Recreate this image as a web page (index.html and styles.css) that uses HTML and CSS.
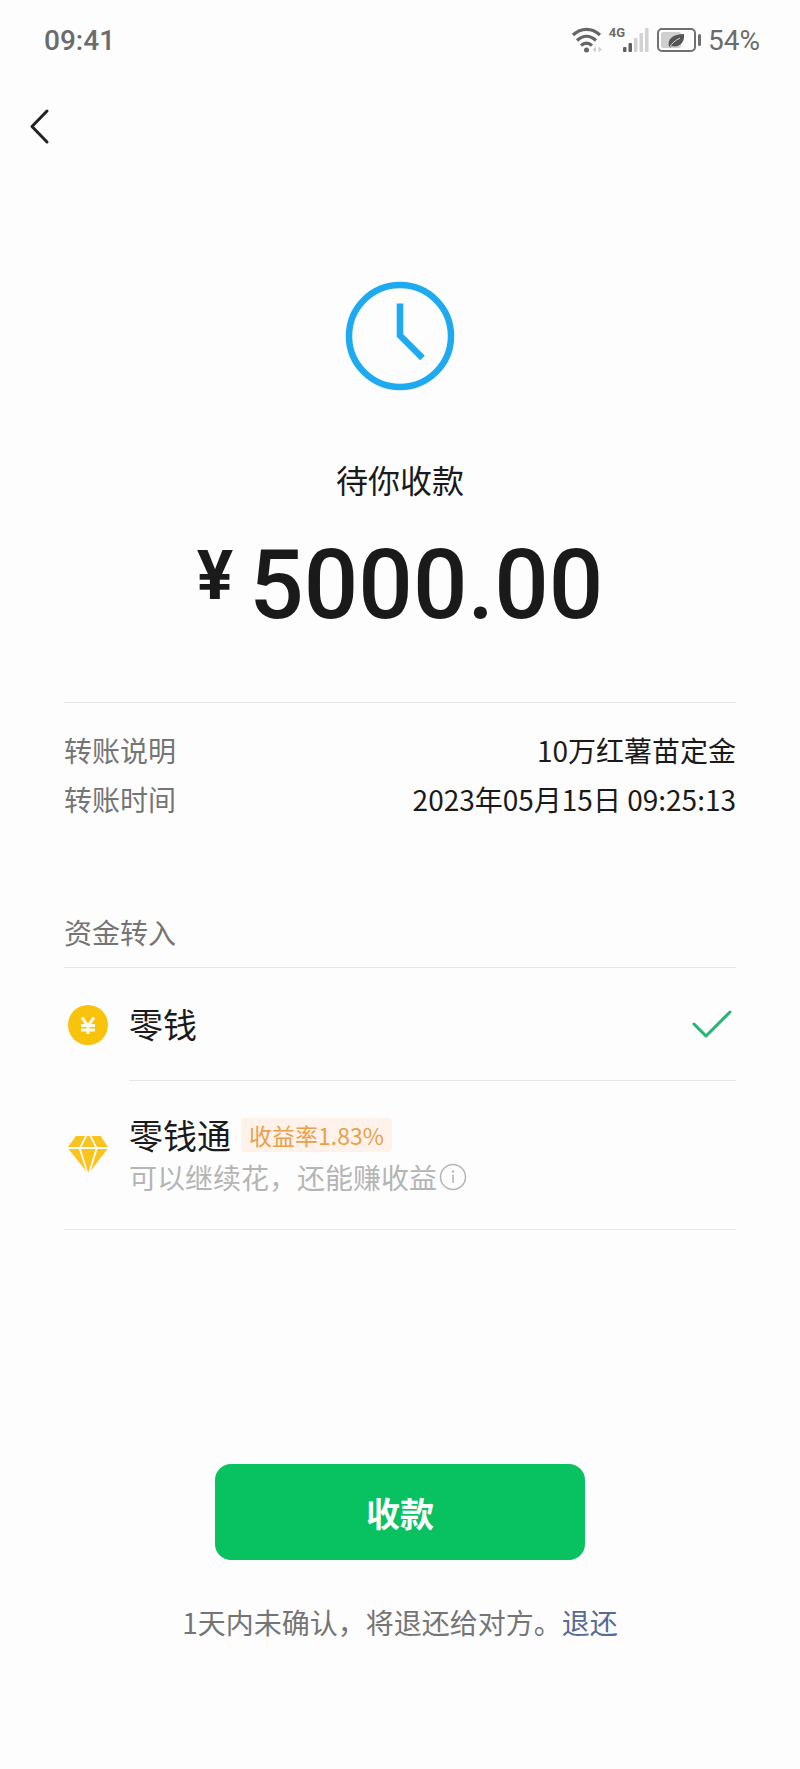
FILE: index.html
```html
<!DOCTYPE html>
<html lang="zh-CN">
<head>
  <meta charset="UTF-8">
  <meta name="viewport" content="width=device-width,initial-scale=1.0">
  <title>待你收款</title>
  <link rel="stylesheet" href="styles.css">
</head>
<body>

<!-- STATUS BAR -->
<div class="status-bar">
  <span class="status-time">09:41</span>
  <div class="status-icons">
    <svg class="wifi" width="32" height="28" viewBox="0 0 32 28" fill="none" stroke="#666" stroke-width="3.200">
      <path d="M2 9C10 1.500 21 1.500 29 9"/>
      <path d="M6 14.500C12 9 19 9 25 14.500"/>
      <path d="M10 19.500C13.500 16.500 17.500 16.500 21 19.500"/>
      <circle cx="15.500" cy="24" r="2.500" fill="#666" stroke="none"/>
      <path d="M25 20.500v6L21.500 23.500zM27.500 20.500v6l3.500-3z" fill="#cfcfcf" stroke="none"/>
    </svg>
    <div class="signal">
      <span class="network">4G</span>
      <svg width="28" height="28" viewBox="0 0 28 28">
        <g fill="#606060">
          <rect x="1" y="21" width="3.500" height="5" rx="1"/>
          <rect x="6.500" y="17" width="3.500" height="9" rx="1"/>
        </g>
        <g fill="#d2d2d2">
          <rect x="12" y="12" width="3.500" height="14" rx="1"/>
          <rect x="17.500" y="7" width="3.500" height="19" rx="1"/>
          <rect x="23" y="2" width="3.500" height="24" rx="1"/>
        </g>
      </svg>
    </div>
    <svg class="battery" width="46" height="28" viewBox="0 0 46 28">
      <rect x="5" y="6" width="20" height="16" rx="2" fill="#cfcfcf"/>
      <rect x="2" y="3" width="37" height="22" rx="4" fill="none" stroke="#707070" stroke-width="2"/>
      <rect x="42" y="8" width="3" height="12" rx="1.500" fill="#707070"/>
      <path d="M13 21C11 13 17 8 28 8C29 17 23 22 15.500 20L14 22Z" fill="#555"/>
      <path d="M13 22C16 17 19 14.500 24 12" fill="none" stroke="#d8d8d8" stroke-width="1"/>
    </svg>
    <span class="battery-level">54%</span>
  </div>
</div>

<!-- NAV -->
<nav class="nav">
  <a href="#" class="back" aria-label="返回">
    <svg width="24" height="40" viewBox="0 0 24 40" fill="none" stroke="#222" stroke-width="3" stroke-linecap="round" stroke-linejoin="round">
      <path d="M19 5L4 20.500L19 36"/>
    </svg>
  </a>
</nav>

<main class="content">
  <!-- AMOUNT -->
  <section class="summary">
    <svg class="clock" width="110" height="110" viewBox="0 0 110 110" fill="none" stroke="#1eaaf1" stroke-width="6.500">
      <circle cx="55" cy="55" r="51"/>
      <path d="M55 22.500V54.500L77.500 77"/>
    </svg>
    <h1>待你收款</h1>
    <p class="amount"><span class="currency">¥</span>5000.00</p>
  </section>

  <!-- TRANSFER DETAILS -->
  <dl class="details">
    <div class="detail-row">
      <dt>转账说明</dt>
      <dd>10万红薯苗定金</dd>
    </div>
    <div class="detail-row">
      <dt>转账时间</dt>
      <dd>2023年05月15日 09:25:13</dd>
    </div>
  </dl>

  <!-- ACCOUNT CHOICE -->
  <form class="accounts">
    <h2>资金转入</h2>
    <label class="account">
      <svg class="account-icon" width="48" height="48" viewBox="0 0 48 48">
        <circle cx="24" cy="24" r="20" fill="#fac30b"/>
        <path d="M18 16.500L24 25L30 16.500M24 24.500V33M17 24.500H31M17 29H31" fill="none" stroke="#fffdf0" stroke-width="3"/>
      </svg>
      <span class="account-body account-body-first">
        <span class="account-name">零钱</span>
        <span class="check">
          <input type="radio" name="account" value="balance" checked>
          <svg width="44" height="32" viewBox="0 0 44 32" fill="none" stroke="#24b571" stroke-width="3" stroke-linecap="round" stroke-linejoin="round">
            <path d="M2 16L14 28L38 4"/>
          </svg>
        </span>
      </span>
    </label>
    <label class="account">
      <svg class="account-icon" width="48" height="48" viewBox="0 0 48 48" fill="#fac31e">
        <path d="M12 5H21L15.500 16H4Z"/>
        <path d="M23 5H25.500L31 16H17.500Z"/>
        <path d="M27.500 5H36.500L44 16H33Z"/>
        <path d="M4.500 18H15L22 40Z"/>
        <path d="M17 18H31.500L24.200 42Z"/>
        <path d="M33.500 18H43.500L26.500 40Z"/>
      </svg>
      <span class="account-body">
        <span class="account-text">
          <span class="account-title">
            <span class="account-name">零钱通</span>
            <span class="rate">收益率1.83%</span>
          </span>
          <span class="account-note">可以继续花，还能赚收益<svg width="30" height="28" viewBox="0 0 30 28" fill="none" stroke="#b5b5b5" stroke-width="1.500"><circle cx="16" cy="14" r="12.500"/><path d="M16 11.500V20"/><circle cx="16" cy="8.500" r="1.200" fill="#b5b5b5" stroke="none"/></svg></span>
        </span>
        <span class="check">
          <input type="radio" name="account" value="fund">
          <svg width="44" height="32" viewBox="0 0 44 32" fill="none" stroke="#24b571" stroke-width="3" stroke-linecap="round" stroke-linejoin="round">
            <path d="M2 16L14 28L38 4"/>
          </svg>
        </span>
      </span>
    </label>
  </form>

  <!-- CONFIRM -->
  <section class="actions">
    <button type="button" class="receive">收款</button>
    <p>1天内未确认，将退还给对方。<a href="#">退还</a></p>
  </section>
</main>

</body>
</html>
```
FILE: styles.css
```css
* {
  box-sizing: border-box;
  margin: 0;
  padding: 0;
}
body {
  font-family: "Noto Sans CJK SC", sans-serif;
  font-size: 28px;
  background-color: #fdfdfd;
  color: #1a1a1a;
}
svg {
  display: block;
  flex-shrink: 0;
}

/* STATUS BAR */
.status-bar {
  display: flex;
  justify-content: space-between;
  align-items: center;
  height: 80px;
  padding: 0 40px 0 44px;
  font-family: Roboto, sans-serif;
  color: #6b6b6b;
}
.status-time {
  font-weight: 500;
}
.status-icons {
  display: flex;
  align-items: center;
  gap: 6px;
}
.signal {
  display: flex;
  align-items: flex-start;
}
.network {
  font-size: 13px;
  line-height: 14px;
  font-weight: bold;
  margin-right: -3px;
}

/* NAV */
.nav {
  display: flex;
  align-items: center;
  height: 92px;
  padding: 0 28px;
}

/* AMOUNT */
.content {
  padding: 109px 64px 0;
}
.summary {
  display: flex;
  flex-direction: column;
  align-items: center;
  padding-bottom: 61px;
  border-bottom: 1px solid #e6e6e6;
}
.summary h1 {
  margin-top: 64px;
  font-size: 32px;
  line-height: 48px;
  font-weight: normal;
}
.amount {
  display: flex;
  align-items: flex-start;
  gap: 16px;
  margin-top: 26px;
  font-family: Roboto, sans-serif;
  font-size: 96px;
  line-height: 112px;
  font-weight: 500;
}
.currency {
  font-size: 68px;
  line-height: 94px;
  font-weight: bold;
}

/* TRANSFER DETAILS */
.details {
  padding: 23px 0 84px;
}
.detail-row {
  display: flex;
  justify-content: space-between;
  line-height: 49px;
}
.detail-row dt {
  color: #757575;
}

/* ACCOUNT CHOICE */
.accounts h2 {
  font-size: 28px;
  line-height: 48px;
  font-weight: normal;
  color: #757575;
  padding-bottom: 11px;
  border-bottom: 1px solid #e6e6e6;
}
.account {
  display: flex;
  align-items: center;
  gap: 17px;
}
.account:last-child {
  border-bottom: 1px solid #e6e6e6;
}
.account-body {
  flex: 1;
  display: flex;
  align-items: center;
  justify-content: space-between;
  min-height: 148px;
}
.account-body-first {
  min-height: 113px;
  border-bottom: 1px solid #e6e6e6;
}
.account-title {
  display: flex;
  align-items: center;
  gap: 10px;
}
.account-name {
  font-size: 34px;
  line-height: 44px;
}
.rate {
  padding: 0 8px;
  font-size: 23px;
  line-height: 34px;
  border-radius: 4px;
  background-color: #fef2ea;
  color: #e9a04a;
}
.account-note {
  display: flex;
  align-items: center;
  line-height: 40px;
  color: #b5b5b5;
}
.check {
  display: grid;
}
.check input,
.check svg {
  grid-area: 1 / 1;
}
.check input {
  opacity: 0;
}
.check input:not(:checked) + svg {
  visibility: hidden;
}

/* CONFIRM */
.actions {
  display: flex;
  flex-direction: column;
  align-items: center;
  padding: 234px 0 80px;
}
.receive {
  width: 55%;
  height: 96px;
  border: none;
  border-radius: 16px;
  background-color: #08c160;
  color: #fff;
  font-family: inherit;
  font-size: 34px;
  font-weight: bold;
  cursor: pointer;
}
.actions p {
  margin-top: 38px;
  line-height: 48px;
  color: #757575;
}
.actions a {
  color: #576b95;
  text-decoration: none;
}
```
